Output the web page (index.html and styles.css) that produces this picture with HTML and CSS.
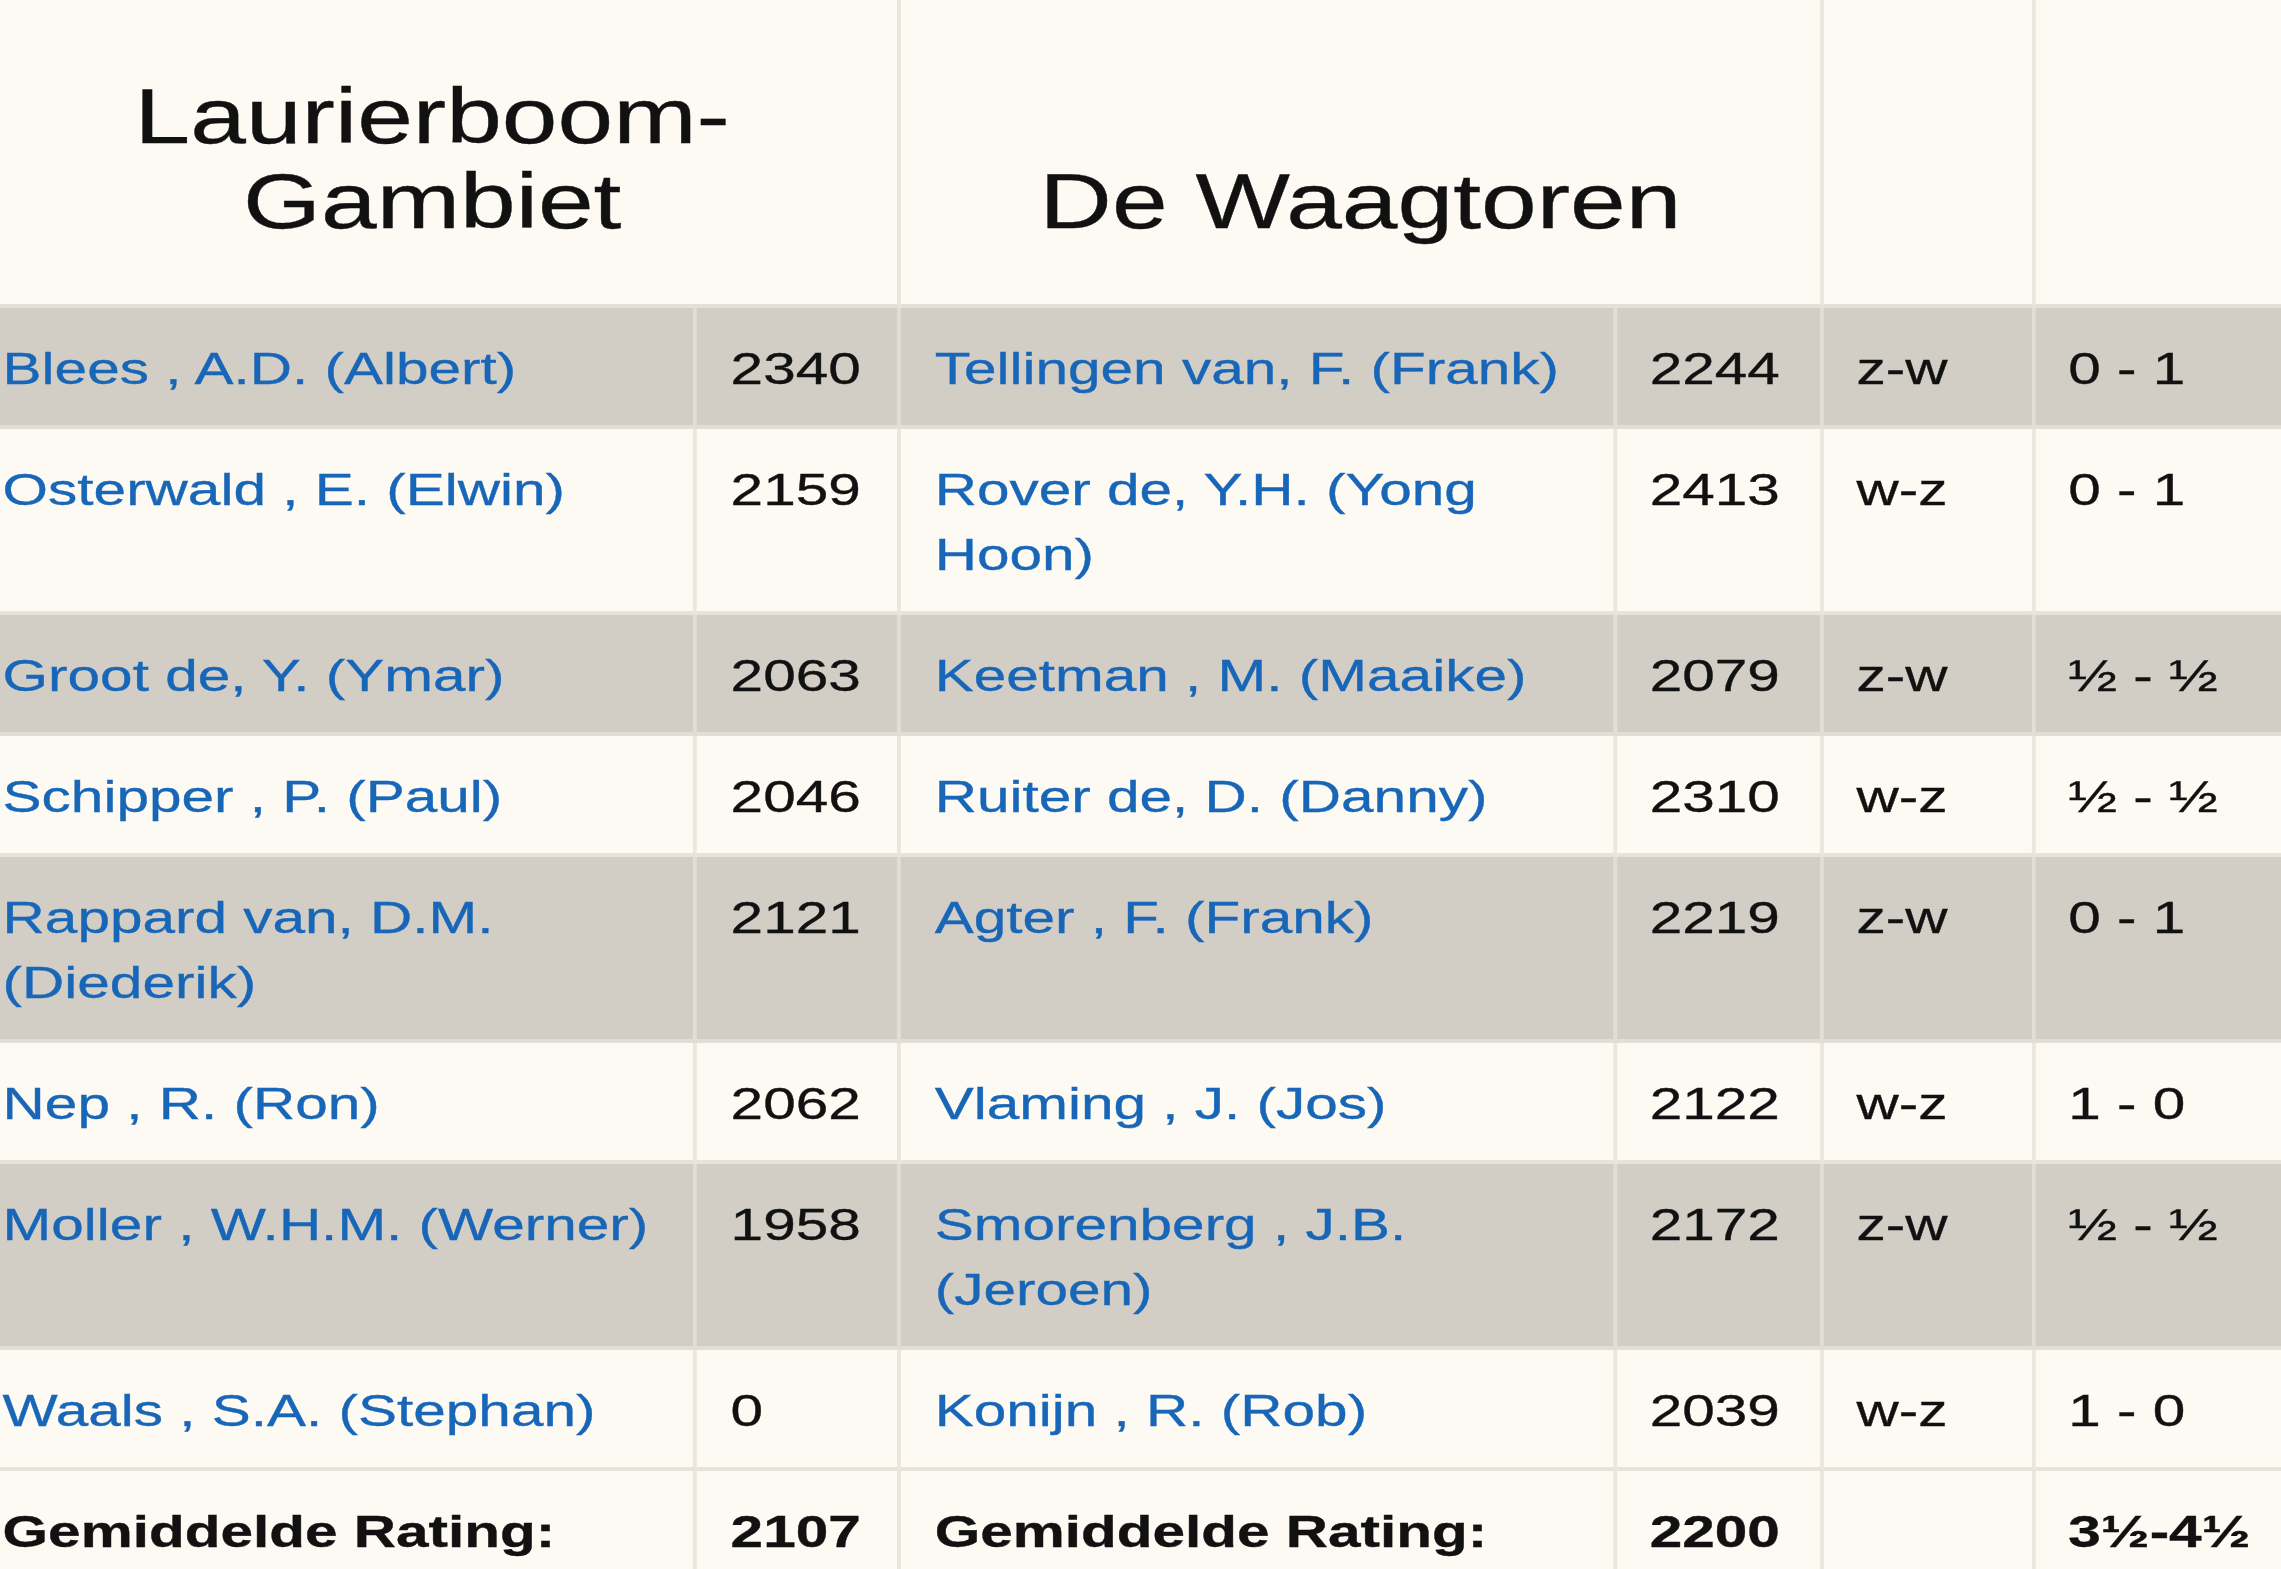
FILE: index.html
```html
<!DOCTYPE html>
<html lang="nl">
<head>
<meta charset="utf-8">
<title>Laurierboom-Gambiet - De Waagtoren</title>
<link rel="stylesheet" href="styles.css">
</head>
<body>
<div class="sheet">
  <table class="match">
    <colgroup>
      <col class="c-name1">
      <col class="c-rate">
      <col class="c-name2">
      <col class="c-rate2">
      <col class="c-color">
      <col class="c-res">
    </colgroup>
    <thead>
      <tr>
        <th colspan="2">Laurierboom-Gambiet</th>
        <th colspan="2">De Waagtoren</th>
        <th></th>
        <th></th>
      </tr>
    </thead>
    <tbody>
      <tr class="odd">
        <td><a href="#">Blees , A.D. (Albert)</a></td><td>2340</td>
        <td><a href="#">Tellingen van, F. (Frank)</a></td><td>2244</td><td>z-w</td><td>0 - 1</td>
      </tr>
      <tr>
        <td><a href="#">Osterwald , E. (Elwin)</a></td><td>2159</td>
        <td><a href="#">Rover de, Y.H. (Yong Hoon)</a></td><td>2413</td><td>w-z</td><td>0 - 1</td>
      </tr>
      <tr class="odd">
        <td><a href="#">Groot de, Y. (Ymar)</a></td><td>2063</td>
        <td><a href="#">Keetman , M. (Maaike)</a></td><td>2079</td><td>z-w</td><td>½ - ½</td>
      </tr>
      <tr>
        <td><a href="#">Schipper , P. (Paul)</a></td><td>2046</td>
        <td><a href="#">Ruiter de, D. (Danny)</a></td><td>2310</td><td>w-z</td><td>½ - ½</td>
      </tr>
      <tr class="odd">
        <td><a href="#">Rappard van, D.M. (Diederik)</a></td><td>2121</td>
        <td><a href="#">Agter , F. (Frank)</a></td><td>2219</td><td>z-w</td><td>0 - 1</td>
      </tr>
      <tr>
        <td><a href="#">Nep , R. (Ron)</a></td><td>2062</td>
        <td><a href="#">Vlaming , J. (Jos)</a></td><td>2122</td><td>w-z</td><td>1 - 0</td>
      </tr>
      <tr class="odd">
        <td><a href="#">Moller , W.H.M. (Werner)</a></td><td>1958</td>
        <td><a href="#">Smorenberg , J.B. (Jeroen)</a></td><td>2172</td><td>z-w</td><td>½ - ½</td>
      </tr>
      <tr>
        <td><a href="#">Waals , S.A. (Stephan)</a></td><td>0</td>
        <td><a href="#">Konijn , R. (Rob)</a></td><td>2039</td><td>w-z</td><td>1 - 0</td>
      </tr>
    </tbody>
    <tfoot>
      <tr>
        <td>Gemiddelde Rating:</td><td>2107</td>
        <td>Gemiddelde Rating:</td><td>2200</td><td></td><td>3½-4½</td>
      </tr>
    </tfoot>
  </table>
</div>
</body>
</html>
```
FILE: styles.css
```css
html, body {
  margin: 0;
  padding: 0;
  height: 100%;
  overflow: hidden;
  background: #fdfaf3;
}

.sheet {
  width: 1755px;
  transform: scaleX(1.3);
  transform-origin: 0 0;
}

.match {
  margin-left: -25px;
  width: 1780px;
  table-layout: fixed;
  border-collapse: separate;
  border-spacing: 0;
  font-family: "Liberation Sans", Arial, sans-serif;
  color: #111;
  background: #fdfaf3;
  -webkit-text-stroke: 0.35px currentColor;
}

.c-name1 { width: 561px; }
.c-rate { width: 157px; }
.c-name2 { width: 551px; }
.c-rate2 { width: 159px; }
.c-color { width: 163px; }
.c-res { width: 189px; }

.match th {
  font-size: 77px;
  line-height: 85px;
  font-weight: normal;
  text-align: center;
  vertical-align: bottom;
  padding: 74px 20px 60px;
  border-right: 3px solid #ebe7df;
  border-bottom: 4px solid #e4e0d8;
}

.match td {
  font-size: 45px;
  line-height: 65px;
  vertical-align: top;
  text-align: left;
  padding: 28px 14px 24px 26px;
  border-right: 3px solid #ebe7df;
  border-bottom: 4px solid #e7e3db;
}

.match td:first-child {
  padding-left: 27px;
}

.match td:nth-child(n+4) {
  padding-left: 25px;
}

.match th:last-child,
.match td:last-child {
  border-right: none;
}

.match tr.odd td {
  background: #d2cec6;
  border-right-color: #e2ded7;
  border-bottom-color: #e2ded7;
}

.match a {
  color: #1866b8;
  text-decoration: none;
}

.match tfoot td {
  font-weight: bold;
}
```
